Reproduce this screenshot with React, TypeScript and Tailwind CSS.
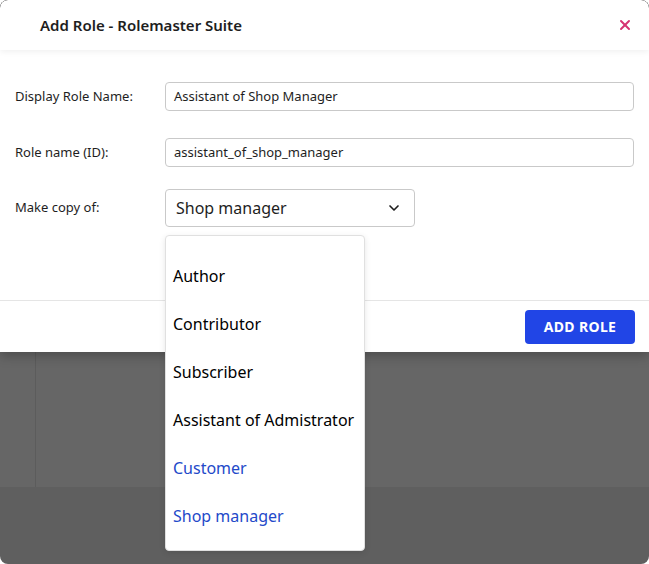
import { ChevronDown, X } from 'lucide-react';

const options = [
  { label: 'Author', active: false },
  { label: 'Contributor', active: false },
  { label: 'Subscriber', active: false },
  { label: 'Assistant of Admistrator', active: false },
  { label: 'Customer', active: true },
  { label: 'Shop manager', active: true },
];

export default function App() {
  return (
    <div className="relative h-[564px] w-[649px] overflow-hidden rounded-lg bg-[#5f5f5f] font-['Inter',sans-serif]">
      {/* backdrop page */}
      <div className="flex h-[487px] bg-[#666666] pt-[352px]">
        <div className="ml-[35px] h-full border-l border-[#5c5c5c]" />
      </div>

      {/* modal */}
      <div className="absolute left-0 top-0 h-[352px] w-full rounded-t-lg bg-white shadow-[0_4px_12px_rgba(0,0,0,0.25)]">
        <div className="flex h-[50px] items-center justify-between pl-10 pr-4 shadow-[0_2px_6px_rgba(0,0,0,0.06)]">
          <h1 className="text-[15px] font-semibold text-[#1e1e1e]">Add Role - Rolemaster Suite</h1>
          <X className="h-4 w-4 text-[#d63372]" strokeWidth={3} />
        </div>

        <div className="flex h-[250px] flex-col px-[15px] pt-8 text-[13px] text-[#1e1e1e]">
          <div className="flex items-center">
            <label className="w-[150px]">Display Role Name:</label>
            <div className="flex h-[29px] flex-1 items-center rounded border border-[#c9c9c9] px-2">Assistant of Shop Manager</div>
          </div>
          <div className="mt-[27px] flex items-center">
            <label className="w-[150px]">Role name (ID):</label>
            <div className="flex h-[29px] flex-1 items-center rounded border border-[#c9c9c9] px-2">assistant_of_shop_manager</div>
          </div>
          <div className="mt-[22px] flex items-center">
            <label className="w-[150px]">Make copy of:</label>
            <div className="flex h-[38px] w-[250px] items-center justify-between rounded border border-[#c9c9c9] pl-[10px] pr-3 text-[16px]">
              Shop manager
              <ChevronDown className="h-4 w-4" strokeWidth={2.5} />
            </div>
          </div>
        </div>

        <div className="flex h-[52px] items-center justify-end border-t border-[#e5e5e5] pr-[14px]">
          <button className="h-[34px] w-[110px] rounded bg-[#2145e6] text-[14px] font-bold tracking-wide text-white">ADD ROLE</button>
        </div>
      </div>

      {/* dropdown */}
      <div className="absolute left-[165px] top-[235px] flex h-[316px] w-[200px] flex-col rounded border border-[#e0e0e0] bg-white pt-4 shadow-[0_2px_6px_rgba(0,0,0,0.1)]">
        {options.map((o) => (
          <div
            key={o.label}
            className={`flex h-12 items-center px-[7px] text-[16px] ${o.active ? 'text-[#2349c9]' : 'text-black'}`}
          >
            {o.label}
          </div>
        ))}
      </div>
    </div>
  );
}
